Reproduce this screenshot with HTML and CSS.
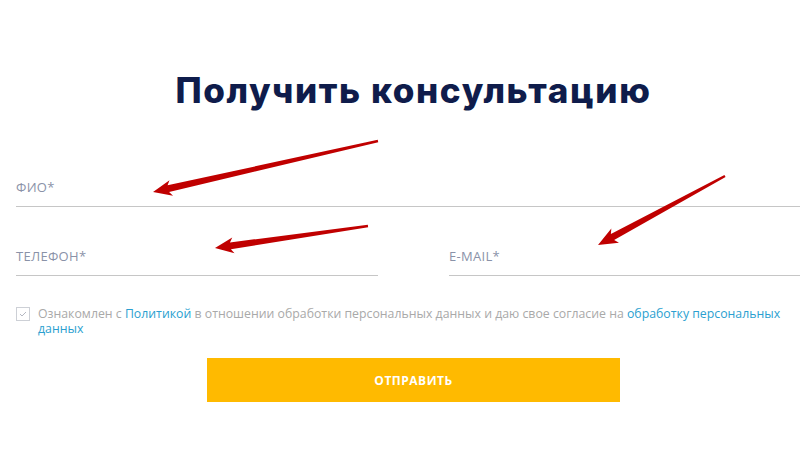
FILE: index.html
```html
<!DOCTYPE html>
<html lang="ru">
<head>
<meta charset="utf-8">
<title>Получить консультацию</title>
<link rel="stylesheet" href="styles.css">
</head>
<body>
<main class="page">
  <form class="form">
    <h1 class="title">Получить консультацию</h1>
    <div class="field field-wide">
      <label class="label">ФИО*</label>
    </div>
    <div class="row">
      <div class="field">
        <label class="label">ТЕЛЕФОН*</label>
      </div>
      <div class="field">
        <label class="label">E-MAIL*</label>
      </div>
    </div>
    <div class="consent">
      <span class="check">
        <svg width="8" height="6" viewBox="0 0 8 6"><path d="M1 3 L3 5 L7 1" fill="none" stroke="#b5b8c2" stroke-width="1"/></svg>
      </span>
      <p class="consent-text">Ознакомлен с <a class="link">Политикой</a> в отношении обработки персональных данных и даю свое согласие на <a class="link">обработку персональных данных</a></p>
    </div>
    <div class="actions">
      <button type="button" class="submit">ОТПРАВИТЬ</button>
    </div>
  </form>
  <svg class="arrows" width="800" height="456" viewBox="0 0 800 456">
    <g fill="#c00000">
      <polygon transform="translate(378 141) rotate(167.2)" points="0,-1.2 215,-3.4 212,-8 230.7,0 212,8 215,3.4 0,1.2"/>
      <polygon transform="translate(368 226) rotate(171.8)" points="0,-1.2 139,-3.4 136,-8 154.6,0 136,8 139,3.4 0,1.2"/>
      <polygon transform="translate(725 176) rotate(151.5)" points="0,-1.2 128,-3.4 125,-8 144.5,0 125,8 128,3.4 0,1.2"/>
    </g>
  </svg>
</main>
</body>
</html>
```

FILE: styles.css
```css
html, body {
  margin: 0;
  padding: 0;
  background: #ffffff;
}
body {
  width: 800px;
  height: 456px;
  overflow: hidden;
  font-family: "Open Sans", "Noto Sans", sans-serif;
}
.page {
  position: relative;
  width: 800px;
  height: 456px;
}
.form {
  width: 795px;
  margin-left: 16px;
  padding-top: 69px;
}
.title {
  margin: 0;
  text-align: center;
  font-family: Inter, "Noto Sans", sans-serif;
  font-weight: 800;
  font-size: 35px;
  line-height: 42px;
  color: #0f1c4b;
  letter-spacing: 1.6px;
}
.field {
  border-bottom: 1px solid #c6c6c6;
  padding-top: 0;
  padding-bottom: 11px;
}
.field-wide {
  margin-top: 40px;
  padding-top: 28px;
}
.row {
  display: grid;
  grid-template-columns: 362px 362px;
  column-gap: 71px;
  margin-top: 41px;
}
.label {
  display: block;
  font-size: 13px;
  line-height: 16px;
  color: #8a92a8;
  letter-spacing: 0.3px;
}
.consent {
  display: flex;
  align-items: flex-start;
  gap: 8px;
  margin-top: 30px;
}
.check {
  flex: 0 0 auto;
  width: 12px;
  height: 12px;
  border: 1px solid #cdd0d6;
  display: flex;
  align-items: center;
  justify-content: center;
  margin-top: 1px;
}
.consent-text {
  margin: 0;
  font-size: 12.3px;
  line-height: 15px;
  color: #a9a9a9;
}
.link {
  color: #2b9fd0;
}
.actions {
  display: flex;
  justify-content: center;
  margin-top: 22px;
}
.submit {
  width: 413px;
  height: 44px;
  border: 0;
  background: #ffba00;
  color: #ffffff;
  font-family: "Open Sans", "Noto Sans", sans-serif;
  font-weight: 700;
  font-size: 12px;
  letter-spacing: 0.5px;
  padding: 0;
}
.arrows {
  position: absolute;
  left: 0;
  top: 0;
  pointer-events: none;
}
```
